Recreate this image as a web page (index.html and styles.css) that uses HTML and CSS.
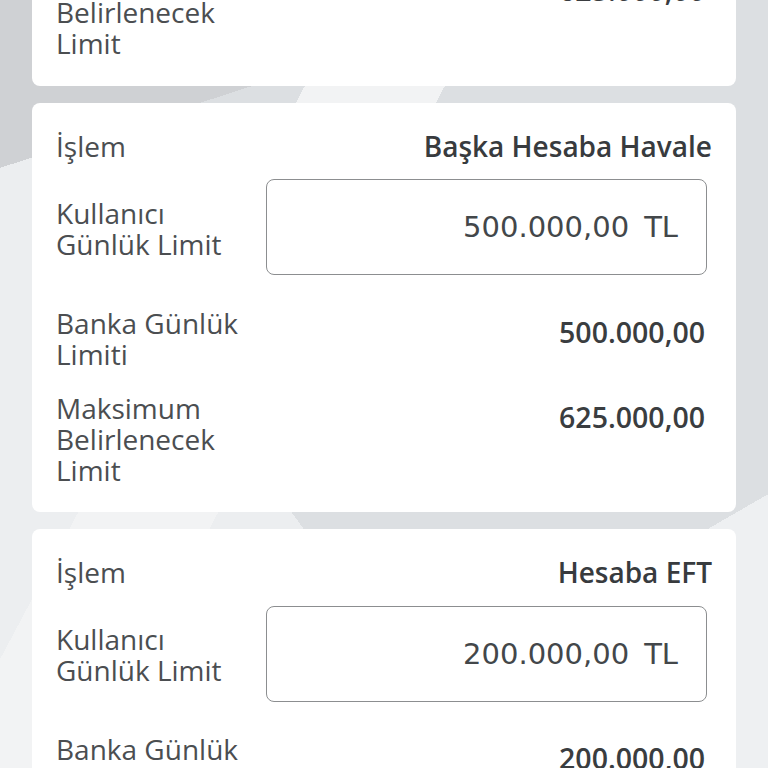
FILE: index.html
```html
<!DOCTYPE html>
<html lang="tr">
<head>
<meta charset="utf-8">
<title>Limitler</title>
<link rel="stylesheet" href="styles.css">
</head>
<body>
<div class="list">
  <section class="card">
    <div class="row row-op"><span class="label">İşlem</span><span class="op">Kendi Hesabıma Havale</span></div>
    <div class="row row-input"><span class="label">Kullanıcı<br>Günlük Limit</span><div class="input"><span>500.000,00</span><span>TL</span></div></div>
    <div class="row row-bank"><span class="label">Banka Günlük<br>Limiti</span><span class="val">500.000,00</span></div>
    <div class="row row-max"><span class="label">Maksimum<br>Belirlenecek<br>Limit</span><span class="val">625.000,00</span></div>
  </section>
  <section class="card">
    <div class="row row-op"><span class="label">İşlem</span><span class="op">Başka Hesaba Havale</span></div>
    <div class="row row-input"><span class="label">Kullanıcı<br>Günlük Limit</span><div class="input"><span>500.000,00</span><span>TL</span></div></div>
    <div class="row row-bank"><span class="label">Banka Günlük<br>Limiti</span><span class="val">500.000,00</span></div>
    <div class="row row-max"><span class="label">Maksimum<br>Belirlenecek<br>Limit</span><span class="val">625.000,00</span></div>
  </section>
  <section class="card">
    <div class="row row-op"><span class="label">İşlem</span><span class="op">Hesaba EFT</span></div>
    <div class="row row-input"><span class="label">Kullanıcı<br>Günlük Limit</span><div class="input"><span>200.000,00</span><span>TL</span></div></div>
    <div class="row row-bank"><span class="label">Banka Günlük<br>Limiti</span><span class="val">200.000,00</span></div>
    <div class="row row-max"><span class="label">Maksimum<br>Belirlenecek<br>Limit</span><span class="val">250.000,00</span></div>
  </section>
</div>
</body>
</html>
```
FILE: styles.css
```css
html, body {
  margin: 0;
  height: 768px;
  overflow: hidden;
}
body {
  font-family: "Open Sans", "Liberation Sans", sans-serif;
  background-color: #dcdfe2;
  background-image:
    linear-gradient(162deg, #cfd1d4 0 16.5%, transparent 16.5%),
    linear-gradient(118deg, transparent 0 29.8%, #f2f3f4 29.8% 41.7%, transparent 41.7%),
    linear-gradient(54deg, #eceef0 0 36%, transparent 36%),
    linear-gradient(150deg, transparent 0 77.4%, #eef0f2 77.4%);
}
.list {
  margin-top: -324px;
  padding: 0 32px;
  display: flex;
  flex-direction: column;
  gap: 17px;
}
.card {
  background: #ffffff;
  border-radius: 8px;
  padding: 28px 24px 26.5px 24px;
  display: flex;
  flex-direction: column;
}
.row {
  display: grid;
  grid-template-columns: 210px 1fr;
}
.label {
  font-size: 28px;
  line-height: 31px;
  color: #4b4e51;
  font-weight: 400;
  white-space: nowrap;
}
.op {
  justify-self: end;
  font-size: 28px;
  line-height: 31px;
  font-weight: 600;
  color: #383b3e;
}
.row-input {
  margin-top: 17.5px;
  align-items: center;
}
.row-input .label {
  margin-top: 3px;
}
.input {
  height: 96px;
  box-sizing: border-box;
  margin-right: 5px;
  border: 1.5px solid #8c8e90;
  border-radius: 8px;
  display: flex;
  align-items: center;
  justify-content: flex-end;
  gap: 15px;
  padding-right: 28px;
  font-family: "DejaVu Sans", "Verdana", sans-serif;
  font-size: 29px;
  color: #43474a;
}
.row-bank {
  margin-top: 32.5px;
}
.row-max {
  margin-top: 23px;
}
.val {
  justify-self: end;
  margin-right: 7px;
  margin-top: 9px;
  font-size: 28.5px;
  line-height: 31px;
  font-weight: 600;
  color: #3a3d40;
}
```
